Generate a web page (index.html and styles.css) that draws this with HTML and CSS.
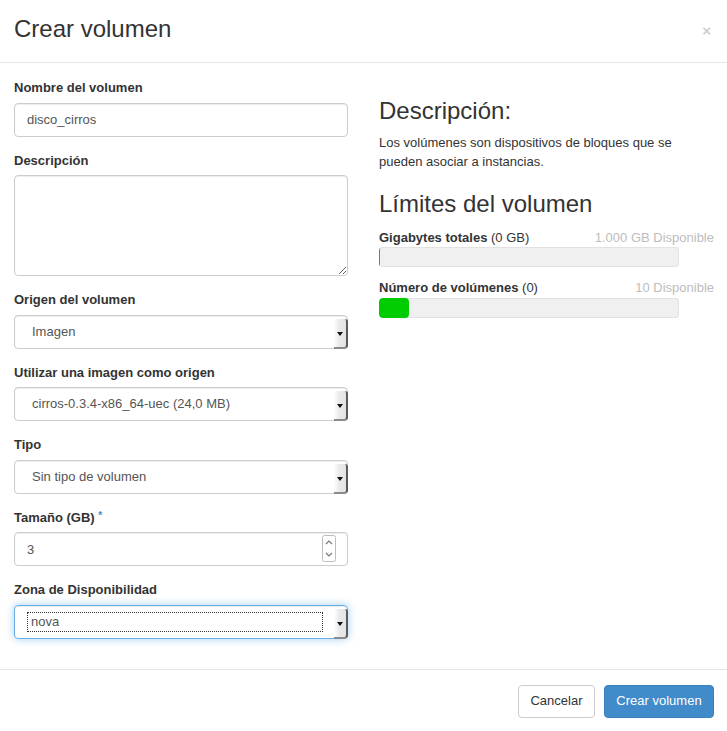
FILE: index.html
```html
<!DOCTYPE html>
<html lang="es">
<head>
<meta charset="utf-8">
<title>Crear volumen</title>
<link rel="stylesheet" href="styles.css">
</head>
<body>
<div class="modal">
  <header class="modal-header">
    <h3 class="modal-title">Crear volumen</h3>
    <span class="close">×</span>
  </header>
  <div class="modal-body">
    <div class="col-left">
      <div class="form-group">
        <label class="label">Nombre del volumen</label>
        <input class="form-control" type="text" value="disco_cirros">
      </div>
      <div class="form-group">
        <label class="label">Descripción</label>
        <textarea class="form-control textarea"></textarea>
      </div>
      <div class="form-group">
        <label class="label">Origen del volumen</label>
        <div class="select"><span class="select-text">Imagen</span><span class="select-btn"></span></div>
      </div>
      <div class="form-group">
        <label class="label">Utilizar una imagen como origen</label>
        <div class="select"><span class="select-text">cirros-0.3.4-x86_64-uec (24,0 MB)</span><span class="select-btn"></span></div>
      </div>
      <div class="form-group">
        <label class="label">Tipo</label>
        <div class="select"><span class="select-text">Sin tipo de volumen</span><span class="select-btn"></span></div>
      </div>
      <div class="form-group">
        <label class="label">Tamaño (GB) <span class="req">*</span></label>
        <div class="number">
          <input class="form-control" type="text" value="3">
          <svg class="spinner" width="14" height="27" viewBox="0 0 14 27">
            <rect x="0.5" y="0.5" width="13" height="26" rx="2" fill="#fff" stroke="#bdbdbd"/>
            <path d="M4 9 L7 6 L10 9" fill="none" stroke="#777" stroke-width="1.2"/>
            <path d="M4 18 L7 21 L10 18" fill="none" stroke="#777" stroke-width="1.2"/>
          </svg>
        </div>
      </div>
      <div class="form-group">
        <label class="label">Zona de Disponibilidad</label>
        <div class="select focus"><span class="select-text ring">nova</span><span class="select-btn"></span></div>
      </div>
    </div>
    <div class="col-right">
      <h3 class="heading">Descripción:</h3>
      <p class="desc">Los volúmenes son dispositivos de bloques que se pueden asociar a instancias.</p>
      <h3 class="heading heading-2">Límites del volumen</h3>
      <div class="quota">
        <div class="quota-row"><span><strong>Gigabytes totales</strong> (0 GB)</span><span class="avail">1.000 GB Disponible</span></div>
        <div class="bar"><div class="fill fill-line"></div></div>
      </div>
      <div class="quota">
        <div class="quota-row"><span><strong>Número de volúmenes</strong> (0)</span><span class="avail">10 Disponible</span></div>
        <div class="bar"><div class="fill" style="width:10%"></div></div>
      </div>
    </div>
  </div>
  <footer class="modal-footer">
    <button class="btn btn-default">Cancelar</button>
    <button class="btn btn-primary">Crear volumen</button>
  </footer>
</div>
</body>
</html>
```

FILE: styles.css
```css
* { box-sizing: border-box; }
html, body { margin: 0; padding: 0; background: #fff; }
body {
  font-family: "Liberation Sans", Arial, sans-serif;
  font-size: 13px;
  line-height: 1.42857;
  color: #333;
}
.modal { width: 727px; }
.modal-header {
  display: flex;
  justify-content: space-between;
  align-items: flex-start;
  padding: 15px 15px 20px 14px;
  border-bottom: 1px solid #e5e5e5;
}
.modal-title {
  margin: 0;
  font-size: 24px;
  font-weight: normal;
  line-height: 27px;
  color: #333;
}
.close {
  font-size: 15px;
  font-weight: bold;
  line-height: 1;
  color: #cfcfcf;
  margin-top: 8px;
  margin-right: 1px;
}
.modal-body {
  display: grid;
  grid-template-columns: 334px 335px;
  column-gap: 31px;
  padding: 16px 13px 15px 14px;
  align-items: start;
}
.form-group { margin-bottom: 15px; }
.label {
  display: block;
  font-weight: bold;
  margin-bottom: 5px;
  color: #333;
}
.req { color: #428bca; font-size: 10px; vertical-align: top; position: relative; top: 0; }
.form-control {
  display: block;
  width: 100%;
  height: 34px;
  padding: 6px 12px;
  font-family: "Liberation Sans", Arial, sans-serif;
  font-size: 13px;
  line-height: 1.42857;
  color: #555;
  background: #fff;
  border: 1px solid #ccc;
  border-radius: 4px;
  box-shadow: inset 0 1px 1px rgba(0,0,0,.075);
  outline: none;
  margin: 0;
}
.textarea { height: 101px; resize: both; }
.select {
  position: relative;
  height: 34px;
  border: 1px solid #ccc;
  border-radius: 4px;
  box-shadow: inset 0 1px 1px rgba(0,0,0,.075);
  display: flex;
  align-items: center;
  padding-left: 12px;
  color: #555;
}
.select-text {
  display: block;
  width: 296px;
  height: 20px;
  line-height: 18px;
  padding-left: 4px;
  border: 1px dotted transparent;
}
.select.focus {
  border-color: #66afe9;
  box-shadow: inset 0 1px 1px rgba(0,0,0,.075), 0 0 8px rgba(102,175,233,.6);
}
.select-text.ring { border-color: #333; padding-left: 3px; }
.select-btn {
  position: absolute;
  right: -1px;
  top: 3px;
  bottom: -1px;
  width: 14px;
  background: linear-gradient(to right, #fff, #e9e9e9 45%, #e4e4e4);
  border-right: 2px solid #5a5a5a;
  border-bottom: 2px solid #8a8a8a;
  border-radius: 0 3px 4px 0;
}
.select-btn::after {
  content: "";
  position: absolute;
  left: 3px;
  top: 50%;
  margin-top: -1px;
  border-left: 3px solid transparent;
  border-right: 3px solid transparent;
  border-top: 4px solid #111;
}
.number { position: relative; }
.spinner { position: absolute; right: 12px; top: 3px; }
.heading {
  margin: 19px 0 10px;
  font-size: 24px;
  font-weight: normal;
  line-height: 1.1;
  color: #333;
}
.heading-2 { margin-top: 19px; }
.desc { margin: 0 0 19px; }
.quota { margin-top: 12px; }
.quota + .quota { margin-top: 12px; }
.quota-row {
  display: flex;
  justify-content: space-between;
}
.avail { color: #bdbdbd; }
.bar {
  width: 300px;
  height: 20px;
  background: #f0f0f0;
  border-radius: 4px;
  box-shadow: inset 0 0 0 1px #e2e2e2;
  overflow: hidden;
}
.fill {
  height: 100%;
  background: #00cc00;
  border-radius: 4px;
}
.fill-line { width: 1px; border-radius: 0; }
.modal-footer {
  display: flex;
  justify-content: flex-end;
  gap: 9px;
  padding: 15px 13px 15px 14px;
  border-top: 1px solid #e5e5e5;
}
.btn {
  height: 33px;
  padding: 0;
  font-family: "Liberation Sans", Arial, sans-serif;
  font-size: 13px;
  line-height: 1.42857;
  white-space: nowrap;
  border-radius: 4px;
  border: 1px solid #ccc;
  background: #fff;
  color: #333;
  cursor: pointer;
}
.btn-default { width: 77px; }
.btn-primary {
  width: 110px;
  background: #428bca;
  border-color: #3a7fc0;
  color: #fff;
}
```
